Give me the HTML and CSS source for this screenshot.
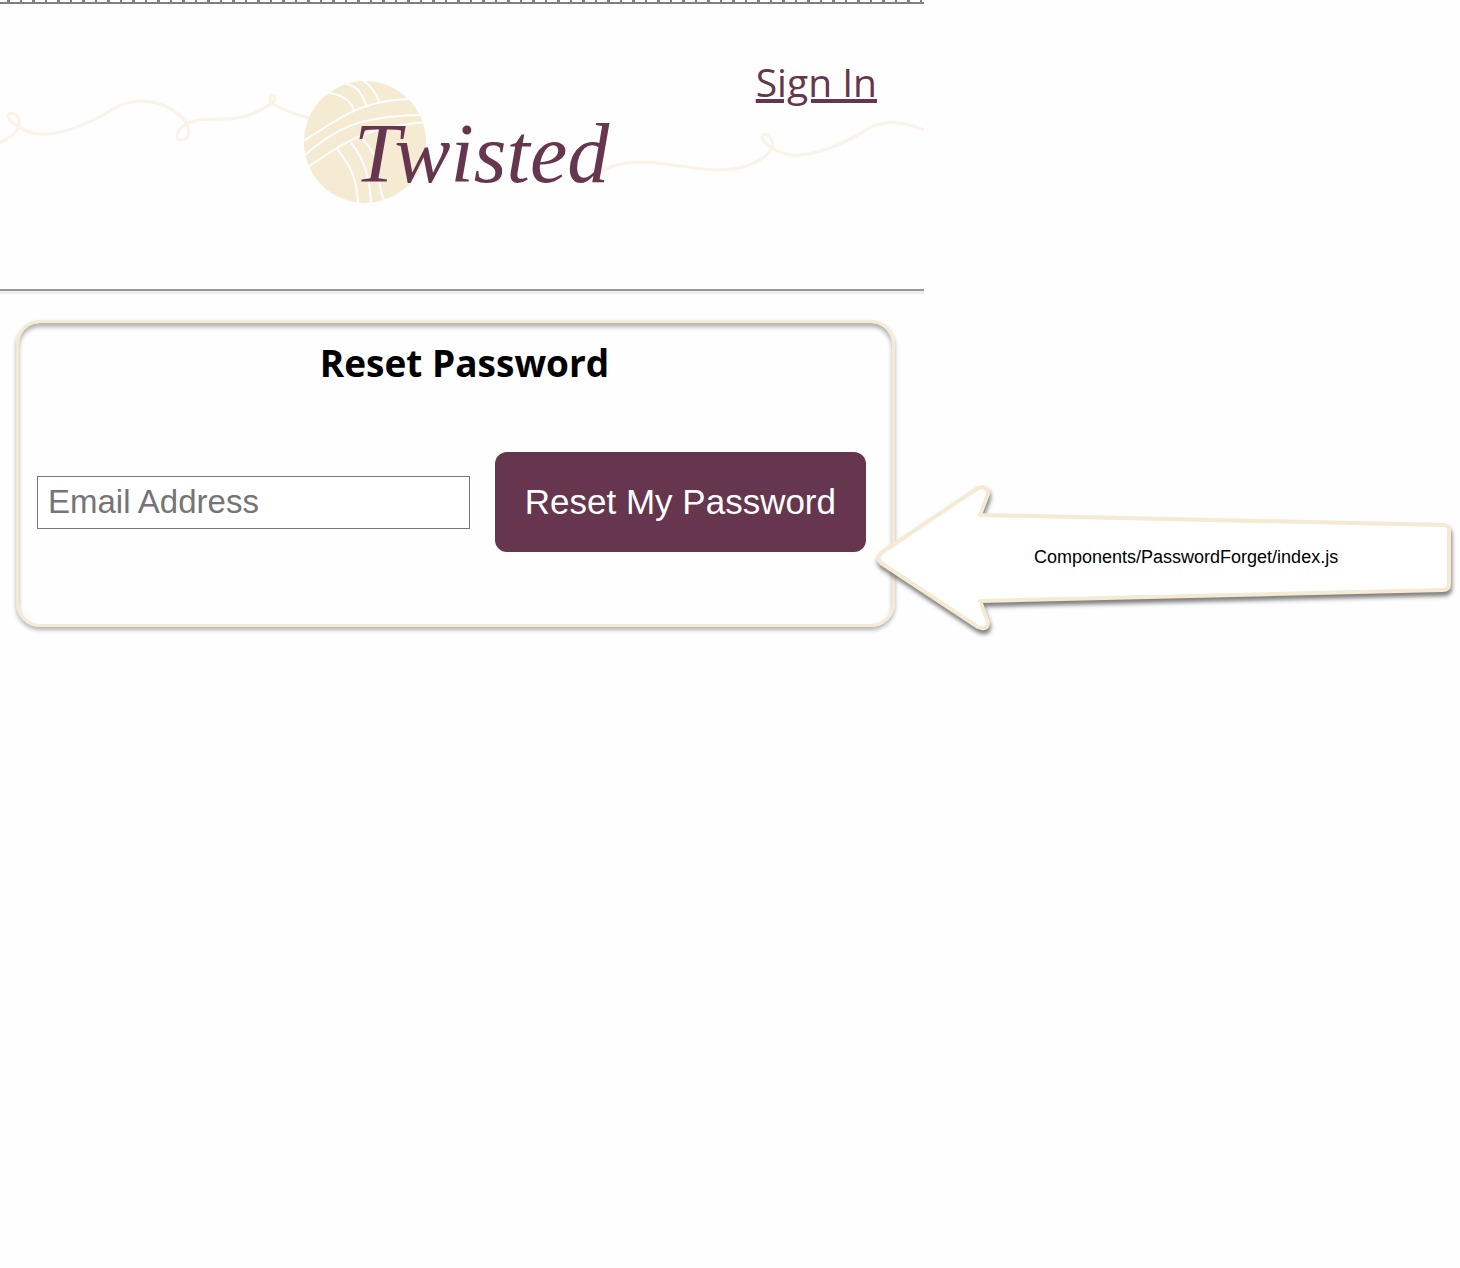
FILE: index.html
```html
<!DOCTYPE html>
<html lang="en">
<head>
<meta charset="utf-8">
<meta name="viewport" content="width=device-width, initial-scale=1">
<title>Twisted – Reset Password</title>
<link rel="stylesheet" href="styles.css">
</head>
<body>
<div class="layout">
  <div class="app">
    <div class="ruler"></div>
    <header class="header">
      <svg class="brand" viewBox="0 4 924 285" role="img" aria-label="Twisted">
        <g class="yarn">
          <path d="M-2 143C7 140 18 133 19 124C19 116 15 113 11 113C7 114 8 119 12 122C20 129 30 134 43 134C63 134 86 124 101 116C117 107 125 101 141 101C162 101 180 112 187 124C191 133 188 140 181 140C175 139 176 133 181 128C191 118 209 119 224 119C244 119 261 111 272 103C276 100 276 95 272 95C269 96 269 101 273 104C283 110 300 117 314 118"/>
          <path d="M592 177C602 172 608 163 642 162C667 162 694 170 720 170C744 170 766 160 773 147C773 140 769 134 764 134C760 136 763 141 770 147C779 153 789 156 801 155C835 151 858 134 873 126C888 120 907 122 926 131"/>
        </g>
        <circle class="ball" cx="365" cy="142" r="61"/>
        <g class="strands">
          <path d="M303 141C340 119 358 100 412 99"/>
          <path d="M305 155C336 129 357 116 421 115"/>
          <path d="M308 167C346 141 370 125 430 122"/>
          <path d="M329 93C343 95 351 101 354 110M347 84C358 87 362 94 366 105M360 79C370 83 375 93 379 101"/>
          <path d="M337 149C352 166 357 182 358 203M351 143C366 161 370 181 371 204M363 140C386 162 374 184 385 202"/>
        </g>
        <text class="wordmark" x="354" y="182">Twisted</text>
      </svg>
      <nav class="nav"><a href="#signin">Sign In</a></nav>
    </header>
    <main class="panel">
      <h1 class="title">Reset Password</h1>
      <form class="form">
        <input class="field" type="email" name="email" placeholder="Email Address" aria-label="Email Address">
        <button class="submit" type="submit">Reset My Password</button>
      </form>
    </main>
  </div>
  <aside class="note">
    <svg class="arrow" viewBox="872 480 588 160">
      <path class="arrow-shape" d="M881 553L978 488Q988 485 988 494L980 515L1443 525Q1449 525 1449 531V584Q1449 590 1443 590L980 601L988 622Q988 631 978 627L881 563Q876 558 881 553Z"/>
      <text class="arrow-label" x="1034" y="563">Components/PasswordForget/index.js</text>
    </svg>
  </aside>
</div>
</body>
</html>
```
FILE: styles.css
```css
* { box-sizing: border-box; }

body {
  margin: 0;
  background: #fefefe;
  color: #000;
  font-family: "Open Sans", "Noto Sans", sans-serif;
}

.layout {
  display: grid;
  grid-template-columns: minmax(0, 924fr) minmax(0, 536fr);
}

.ruler {
  height: 4px;
  border-bottom: 2px solid #808080;
  background: repeating-linear-gradient(90deg,
    transparent 0 7px, #808080 7px 10px,
    transparent 10px 20px, #808080 20px 22px,
    transparent 22px 25px);
}

.header {
  display: grid;
  border-bottom: 2px solid #999;
  box-shadow: 0 3px 0 #eee;
}

.brand, .nav { grid-area: 1 / 1; }

.brand {
  display: block;
  width: 100%;
  overflow: hidden;
}

.yarn, .strands { fill: none; stroke-linecap: round; }
.yarn { stroke: #faf3e6; stroke-width: 3; }
.ball { fill: #f5ead2; }
.strands { stroke: #fefefe; stroke-width: 2; }

.wordmark {
  fill: #66354e;
  font: italic 84px "Liberation Serif", serif;
}

.nav {
  justify-self: end;
  align-self: start;
  padding: 50px 47px 0 0;
  font-size: 39px;
  line-height: 56px;
}

.nav a {
  color: #66354e;
  text-decoration-thickness: 4px;
  text-underline-offset: 2px;
}

.panel {
  margin: 29px 29px 0 16px;
  padding: 12px 26px 72px 18px;
  border: 3px solid #f5ead2;
  border-radius: 24px;
  box-shadow: 0 3px 4px rgba(0, 0, 0, .3), inset 0 4px 4px rgba(0, 0, 0, .3);
}

.title {
  margin: 0 0 61px;
  padding-left: 26px;
  font-size: 37px;
  line-height: 56px;
  text-align: center;
}

.form {
  display: flex;
  align-items: center;
  gap: 25px;
}

.field {
  flex: 1;
  min-width: 0;
  height: 53px;
  padding: 0 10px;
  border: 1px solid #767676;
  background: #fff;
  font: 33px "Liberation Sans", Arial, sans-serif;
}

.field::placeholder { color: #757575; }

.submit {
  height: 100px;
  padding: 0 30px;
  border: 0;
  border-radius: 12px;
  background: #66354e;
  color: #fff;
  font: 35px "Liberation Sans", Arial, sans-serif;
}

.note {
  position: relative;
  padding-top: 480px;
}

.arrow {
  display: block;
  width: calc(100% + 52px);
  margin-left: -52px;
}

.arrow-shape {
  fill: #fff;
  stroke: #f5ead2;
  stroke-width: 4;
  stroke-linejoin: round;
  filter: drop-shadow(1px 4px 2px rgba(0, 0, 0, .5));
}

.arrow-label { font: 18px "Liberation Sans", Arial, sans-serif; }
```
